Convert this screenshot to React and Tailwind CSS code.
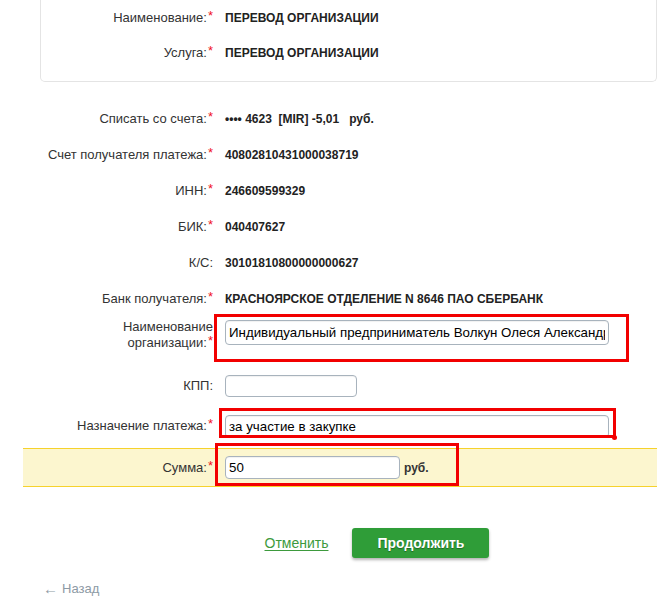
import React from "react";

const cardRows = [
  { label: "Наименование:", value: "ПЕРЕВОД ОРГАНИЗАЦИИ", required: true },
  { label: "Услуга:", value: "ПЕРЕВОД ОРГАНИЗАЦИИ", required: true },
];

const infoRows = [
  { label: "Списать со счета:", value: "•••• 4623  [MIR] -5,01   руб.", required: true },
  { label: "Счет получателя платежа:", value: "40802810431000038719", required: true },
  { label: "ИНН:", value: "246609599329", required: true },
  { label: "БИК:", value: "040407627", required: true },
  { label: "К/С:", value: "30101810800000000627", required: false },
  { label: "Банк получателя:", value: "КРАСНОЯРСКОЕ ОТДЕЛЕНИЕ N 8646 ПАО СБЕРБАНК", required: true },
];

const Star = () => (
  <span className="text-[#f0141e] text-[13px] relative -top-[2px] ml-[1px]">*</span>
);

const Label = ({ children, required, width }) => (
  <div className={`${width} shrink-0 text-right text-[13px] text-[#333]`}>
    {children}
    {required && <Star />}
  </div>
);

const inputClass =
  "bg-white border border-[#a8b3bd] rounded-[4px] px-[3px] text-[13.3px] text-black outline-none shadow-[inset_0_1px_1px_rgba(0,0,0,0.06)]";

export default function App() {
  return (
    <div className="w-[657px] h-[596px] overflow-hidden bg-white font-['Liberation_Sans',Arial,sans-serif]">
      <div className="ml-[40px] border border-t-0 border-[#e4e4e4] rounded-b-[5px] pb-[11px]">
        {cardRows.map((row, i) => (
          <div key={i} className="h-[35px] flex items-center">
            <Label required={row.required} width="w-[172px]">{row.label}</Label>
            <div className="ml-[12px] text-[12px] font-bold text-[#222]">{row.value}</div>
          </div>
        ))}
      </div>

      <div className="mt-[19px]">
        {infoRows.map((row) => (
          <div key={row.label} className="h-9 flex items-center">
            <Label required={row.required} width="w-[213px]">{row.label}</Label>
            <div className="ml-[12px] text-[12px] font-bold text-[#222] whitespace-pre">{row.value}</div>
          </div>
        ))}
      </div>

      <div className="relative flex items-start mt-[2px] h-[49px]">
        <div className="w-[213px] shrink-0 text-right text-[13px] leading-4 text-[#333]">
          Наименование
          <br />
          организации:
          <Star />
        </div>
        <input
          readOnly
          value="Индивидуальный предприниматель Волкун Олеся Александровна"
          className={`${inputClass} ml-[12px] mt-[1px] w-[384px] h-[25px]`}
        />
        <div className="absolute left-[214px] top-[-5px] w-[415px] h-[48px] border-[3px] border-[#f20000]" />
      </div>

      <div className="flex items-center h-9">
        <Label width="w-[213px]">КПП:</Label>
        <input readOnly value="" className={`${inputClass} ml-[12px] w-[132px] h-[22px]`} />
      </div>

      <div className="relative flex items-center h-[44px]">
        <Label required width="w-[213px]">Назначение платежа:</Label>
        <input
          readOnly
          value="за участие в закупке"
          className={`${inputClass} ml-[12px] w-[384px] h-[23px]`}
        />
        <div className="absolute left-[219px] top-[4px] w-[397px] h-[30px] border-[3px] border-[#f20000]" />
        <div className="absolute left-[612px] top-[31px] w-[5px] h-[5px] rounded-full bg-[#f20000]" />
      </div>

      <div className="relative ml-[23px] h-[39px] flex items-center bg-[#fcf6cf] border-y border-[#f6d22c]">
        <Label required width="w-[190px]">Сумма:</Label>
        <input readOnly value="50" className={`${inputClass} ml-[12px] w-[175px] h-[23px]`} />
        <span className="ml-[4px] text-[12px] font-bold text-[#333]">руб.</span>
        <div className="absolute left-[192px] top-[-6px] w-[244px] h-[43px] border-[3px] border-[#f20000]" />
      </div>

      <div className="mt-[41px] flex items-center justify-center gap-[24px] pl-[137px] pr-[40px]">
        <a href="#" className="text-[14px] text-[#3d9a3d] underline underline-offset-2">
          Отменить
        </a>
        <button className="w-[137px] h-[30px] rounded-[3px] bg-[#2f9d38] text-white text-[14px] font-bold shadow-[0_2px_3px_rgba(0,0,0,0.3)] [text-shadow:0_1px_1px_rgba(0,0,0,0.35)]">
          Продолжить
        </button>
      </div>

      <div className="mt-[23px] ml-[43px] flex items-center gap-[4px] text-[13px] leading-4 text-[#8d9aa5]">
        <span className="text-[15px]">←</span>
        <span>Назад</span>
      </div>
    </div>
  );
}
